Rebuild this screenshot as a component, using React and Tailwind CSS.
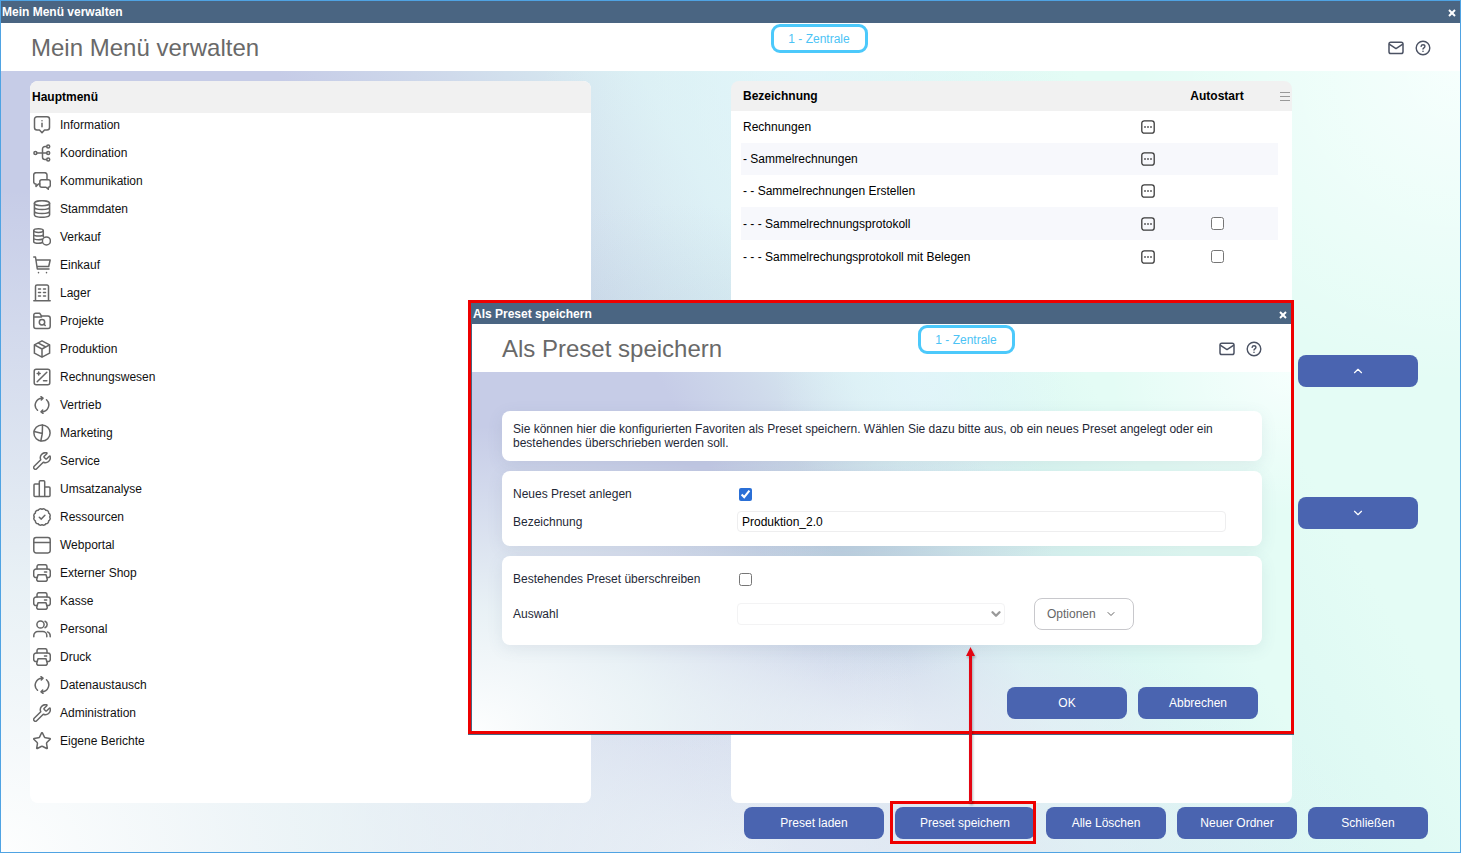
import React, { useState } from 'react';
import { ChevronDown, ChevronUp, Star, Users, Wrench, X } from 'lucide-react';

const BACKDROP =
  'bg-[radial-gradient(ellipse_22%_40%_at_100%_0%,#f6fffd,transparent),radial-gradient(ellipse_55%_85%_at_0%_100%,#fdfefe_0%,#f1faf9cc_40%,transparent),radial-gradient(ellipse_25%_35%_at_46%_52%,#b6d0de99,transparent),radial-gradient(ellipse_45%_30%_at_50%_100%,#eaf1f7dd,transparent),radial-gradient(ellipse_18%_50%_at_55%_0%,#e3f5fbcc,transparent),linear-gradient(60deg,#c6cce7_38%,#cfdaeb_47%,#d9eef2_57%,#dcf8f3_69%,#e4fcf5_80%)]';

// Scalloped outline of the "Ressourcen" badge
const badgePath = (() => {
  const lobes = 12;
  const points = Array.from({ length: lobes }, (_, i) => {
    const a = (i / lobes) * Math.PI * 2;
    return `${(9 + 7.7 * Math.cos(a)).toFixed(2)} ${(9 + 7.7 * Math.sin(a)).toFixed(2)}`;
  });
  return `M${points[0]}` + points.slice(1).concat(points[0]).map((p) => `A2.6 2.6 0 0 1 ${p}`).join('') + 'z';
})();

function Icon({ children }) {
  return (
    <svg
      viewBox="0 0 18 18"
      className="mt-[3px] size-[18px] shrink-0 text-[#666]"
      fill="none"
      stroke="currentColor"
      strokeWidth="1.5"
      strokeLinecap="round"
      strokeLinejoin="round"
      aria-hidden="true"
    >
      {children}
    </svg>
  );
}

const PrinterIcon = () => (
  <Icon>
    <path d="M4 5V2.7a2 2 0 0 1 2-2h6a2 2 0 0 1 2 2V5" />
    <path d="M4 13.6H3A2.3 2.3 0 0 1 .7 11.3V7.5A2.5 2.5 0 0 1 3.2 5h11.6a2.5 2.5 0 0 1 2.5 2.5v3.8a2.3 2.3 0 0 1-2.3 2.3h-1" />
    <path d="M5 10.7h8l1.2 4.3a1.8 1.8 0 0 1-1.7 2.3h-7A1.8 1.8 0 0 1 3.8 15z M11.5 8h2.2" />
  </Icon>
);

const CycleIcon = () => (
  <Icon>
    <path d="M9.5 2.2A6.9 6.9 0 0 0 4.5 14.2 M8 .7l2 1.5L8.3 4" />
    <path d="M8.5 15.8a6.9 6.9 0 0 0 5-12 M10 17.3l-2-1.5L9.7 14" />
  </Icon>
);

const WrenchIcon = () => (
  <Wrench viewBox="1.2 1.2 21.6 21.6" strokeWidth={1.8} className="mt-[3px] size-[18px] shrink-0 text-[#666]" />
);

const menuItems = [
  {
    label: 'Information',
    icon: (
      <Icon>
        <path d="M4 .8h10A2.5 2.5 0 0 1 16.500 3.300v8.200A2.500 2.500 0 0 1 14 14h-2.500L9 16.800 6.500 14H4a2.500 2.500 0 0 1-2.500-2.500V3.300A2.500 2.500 0 0 1 4 .8z M9 7.300v3.500 M9 4.700v.1" />
      </Icon>
    ),
  },
  {
    label: 'Koordination',
    icon: (
      <Icon>
        <circle cx="2.4" cy="9" r="1.5" />
        <circle cx="15.2" cy="2.5" r="1.5" />
        <circle cx="15.2" cy="9" r="1.5" />
        <circle cx="15.2" cy="15.5" r="1.5" />
        <path d="M4 9h9.600 M13.600 2.500H12A2.500 2.500 0 0 0 9.500 5v8a2.500 2.500 0 0 0 2.500 2.500h1.600" />
      </Icon>
    ),
  },
  {
    label: 'Kommunikation',
    icon: (
      <Icon>
        <path d="M14 7.500V3A2.300 2.300 0 0 0 11.700.7H3A2.300 2.300 0 0 0 .7 3v6.800A2.300 2.300 0 0 0 3 12.100v2.400l2.400-2.400h1.400" />
        <path d="M8.800 7.700h6.500a2 2 0 0 1 2 2v3.600a2 2 0 0 1-2 2v2l-2.300-2H8.800a2 2 0 0 1-2-2V9.700a2 2 0 0 1 2-2z" />
      </Icon>
    ),
  },
  {
    label: 'Stammdaten',
    icon: (
      <Icon>
        <ellipse cx="9" cy="3.2" rx="7.6" ry="2.5" />
        <path d="M1.400 3.200v11.600c0 1.400 3.400 2.500 7.600 2.500s7.600-1.100 7.600-2.500V3.200 M1.400 7c0 1.400 3.400 2.500 7.600 2.500s7.600-1.100 7.600-2.500 M1.400 11c0 1.400 3.400 2.500 7.600 2.500s7.600-1.100 7.600-2.500" />
      </Icon>
    ),
  },
  {
    label: 'Verkauf',
    icon: (
      <Icon>
        <ellipse cx="5.5" cy="2.6" rx="4.8" ry="1.8" />
        <path d="M.7 2.600v10.900c0 1 2.100 1.800 4.800 1.800 1.300 0 2.500-.2 3.400-.5 M10.300 2.600v6 M.7 6.200C.7 7.200 2.800 8 5.500 8s4.800-.8 4.800-1.800 M.7 9.900c0 1 2.100 1.800 4.800 1.800 1.300 0 2.500-.2 3.400-.5" />
        <circle cx="13.4" cy="12.900" r="4" />
      </Icon>
    ),
  },
  {
    label: 'Einkauf',
    icon: (
      <Icon>
        <path d="M.7 1h1.800l1.800 12h11.700 M3 4h14.200l-1.500 6.500H4 M5.500 16.400v.3 M13.500 16.400v.3" />
      </Icon>
    ),
  },
  {
    label: 'Lager',
    icon: (
      <Icon>
        <path d="M2.500 16.700V2.500A1.500 1.500 0 0 1 4 1h10a1.500 1.500 0 0 1 1.500 1.500v14.200 M.8 16.700h16.400 M5.500 5h2 M10.500 5h2 M5.500 8.500h2 M10.500 8.500h2 M5.500 12h2 M10.500 12h2" />
      </Icon>
    ),
  },
  {
    label: 'Projekte',
    icon: (
      <Icon>
        <path d="M.8 5V3a1.800 1.800 0 0 1 1.800-1.800h4L8.500 4H15a2.300 2.300 0 0 1 2.200 2.300v8A2.300 2.300 0 0 1 15 16.600H3a2.300 2.300 0 0 1-2.200-2.300V5h7.700" />
        <circle cx="9" cy="10.300" r="2.700" />
        <path d="M11 12.300l1.200 1.200" />
      </Icon>
    ),
  },
  {
    label: 'Produktion',
    icon: (
      <Icon>
        <path d="M9 .8l7.600 4v8.400L9 17.200l-7.600-4V4.800z M1.400 4.800L9 9l7.600-4.200 M9 9v8.200 M5 2.900L12.800 7" />
      </Icon>
    ),
  },
  {
    label: 'Rechnungswesen',
    icon: (
      <Icon>
        <rect x="1.200" y="1.200" width="15.600" height="15.600" rx="2" />
        <path d="M4.200 13.800l9.600-9.600 M4.200 5.500h3 M5.700 4v3 M10.500 12.700h3.300" />
      </Icon>
    ),
  },
  { label: 'Vertrieb', icon: <CycleIcon /> },
  {
    label: 'Marketing',
    icon: (
      <Icon>
        <circle cx="9" cy="9" r="8.100" />
        <path d="M9.500 1L9.300 9.500 7.800 17 M1.200 7.500l8.100 2" />
      </Icon>
    ),
  },
  { label: 'Service', icon: <WrenchIcon /> },
  {
    label: 'Umsatzanalyse',
    icon: (
      <Icon>
        <path d="M6.300 16.500V1.800a1 1 0 0 1 1-1h3.400a1 1 0 0 1 1 1v14.700 M6.300 4H2a1 1 0 0 0-1 1v10.500a1 1 0 0 0 1 1h14a1 1 0 0 0 1-1V8a1 1 0 0 0-1-1h-4.300" />
      </Icon>
    ),
  },
  {
    label: 'Ressourcen',
    icon: (
      <Icon>
        <path d={badgePath} />
        <path d="M6.300 9.200l2 1.900 3.600-3.800" />
      </Icon>
    ),
  },
  {
    label: 'Webportal',
    icon: (
      <Icon>
        <rect x=".8" y="1.500" width="16.400" height="15.400" rx="2.300" />
        <path d="M.8 6.500h16.400" />
      </Icon>
    ),
  },
  { label: 'Externer Shop', icon: <PrinterIcon /> },
  { label: 'Kasse', icon: <PrinterIcon /> },
  {
    label: 'Personal',
    icon: (
      <Icon>
        <circle cx="7.500" cy="4.500" r="3.600" />
        <path d="M.8 16.800v-1.300a4 4 0 0 1 4-4h5a4 4 0 0 1 4 4v1.300 M12 1.200a3.600 3.600 0 0 1 0 6.600 M14.500 11.900a4 4 0 0 1 2.700 3.800v1.100" />
      </Icon>
    ),
  },
  { label: 'Druck', icon: <PrinterIcon /> },
  { label: 'Datenaustausch', icon: <CycleIcon /> },
  { label: 'Administration', icon: <WrenchIcon /> },
  {
    label: 'Eigene Berichte',
    icon: <Star viewBox="1.2 1.2 21.6 21.6" strokeWidth={1.8} className="mt-[3px] size-[18px] shrink-0 text-[#666]" />,
  },
];

const favorites = [
  { name: 'Rechnungen', autostart: false },
  { name: '- Sammelrechnungen', autostart: false },
  { name: '- - Sammelrechnungen Erstellen', autostart: false },
  { name: '- - - Sammelrechnungsprotokoll', autostart: true },
  { name: '- - - Sammelrechungsprotokoll mit Belegen', autostart: true },
];

function Button({ children, className = 'w-[120px]', ...props }) {
  return (
    <button
      type="button"
      className={`flex h-8 items-center justify-center rounded-lg bg-[#4a64b0] text-white ${className}`}
      {...props}
    >
      {children}
    </button>
  );
}

function TitleBar({ title, className = 'h-[22px]' }) {
  return (
    <div className={`flex items-center justify-between bg-[#4a6582] pl-px text-white ${className}`}>
      <span className="font-bold">{title}</span>
      <button type="button" aria-label="Fenster schließen" className="mt-0.5 flex w-4 justify-center">
        <X size={12} strokeWidth={4} strokeLinecap="butt" />
      </button>
    </div>
  );
}

function PageHeader({ title, badgeClass }) {
  return (
    <header className="flex h-12 items-start bg-white">
      <h1 className="w-1/2 shrink-0 pl-[30px] text-2xl leading-[50px] text-[#696969]">{title}</h1>
      <span
        className={`mt-px flex h-[29px] w-[97px] shrink-0 items-center justify-center rounded-[9px] border-3 border-[#4cc9fb] text-[#4cc3f5] ${badgeClass}`}
      >
        1 - Zentrale
      </span>
      <div className="mr-[29px] ml-auto flex h-full items-center gap-[11px] pt-0.5 text-[#4b5263]">
        <button type="button" aria-label="Nachricht">
          <svg viewBox="0 0 16 16" className="size-4" fill="none" stroke="currentColor" strokeWidth="1.5" strokeLinejoin="round">
            <rect x="1" y="2.200" width="14" height="11.400" rx="1.800" />
            <path d="M1.200 4.200L8 8.600l6.800-4.400" />
          </svg>
        </button>
        <button type="button" aria-label="Hilfe">
          <svg viewBox="0 0 16 16" className="size-4" fill="none" stroke="currentColor" strokeWidth="1.4" strokeLinecap="round">
            <circle cx="8" cy="8" r="6.800" />
            <path d="M6.100 6.400c.2-1.200 1-1.700 1.900-1.700 1.100 0 1.900.7 1.900 1.700 0 1.400-1.900 1.500-1.900 2.700 M8 11.300v.1" />
          </svg>
        </button>
      </div>
    </header>
  );
}

function MainMenu() {
  return (
    <nav className="overflow-hidden rounded-lg bg-white">
      <h2 className="flex h-8 items-center bg-[#f1f1f1] pl-0.5 font-bold text-black">Hauptmenü</h2>
      <ul>
        {menuItems.map((item) => (
          <li key={item.label} className="h-7">
            <a href="#" className="flex h-full items-start gap-[9px] pl-[3px] leading-6 text-[#111]">
              {item.icon}
              {item.label}
            </a>
          </li>
        ))}
      </ul>
    </nav>
  );
}

function FavoritesTable() {
  return (
    <section className="flex items-start rounded-lg bg-[linear-gradient(#f1f1f1_30px,#fff_30px)] pl-[10px] text-black">
      <table className="min-w-0 flex-1 table-fixed">
        <thead>
          <tr className="h-[30px] text-left">
            <th className="pl-0.5">Bezeichnung</th>
            <th className="w-10" aria-label="Aktionen" />
            <th className="w-[110px] pr-3 text-center">Autostart</th>
          </tr>
        </thead>
        <tbody>
          {favorites.map((row) => (
            <tr key={row.name} className={`even:bg-[#f7f8fc] ${row.autostart ? 'h-[33px]' : 'h-8'}`}>
              <td className="pl-0.5">{row.name}</td>
              <td>
                <button type="button" aria-label={`${row.name} bearbeiten`} className="mx-auto block">
                  <svg viewBox="0 0 14 14" className="size-[14px]" fill="none" stroke="#3a3a3a" strokeWidth="1.3">
                    <rect x=".8" y=".8" width="12.400" height="12.400" rx="2.500" />
                    <path d="M3.200 7h1.600 M6.200 7h1.600 M9.200 7h1.600" strokeWidth="1.600" />
                  </svg>
                </button>
              </td>
              <td className="pr-3">
                {row.autostart && (
                  <input type="checkbox" aria-label={`Autostart ${row.name}`} className="mx-auto block size-[13px]" />
                )}
              </td>
            </tr>
          ))}
        </tbody>
      </table>
      <button type="button" aria-label="Spalten" className="flex h-[30px] w-[14px] items-center justify-center">
        <svg viewBox="0 0 10 10" className="size-[10px]" stroke="#999" strokeWidth="1">
          <path d="M0 1.500h10 M0 5.500h10 M0 9.500h10" />
        </svg>
      </button>
    </section>
  );
}

function PresetDialog() {
  const [createNew, setCreateNew] = useState(true);
  const [overwrite, setOverwrite] = useState(false);
  const [name, setName] = useState('Produktion_2.0');

  return (
    <div
      role="dialog"
      aria-label="Als Preset speichern"
      className="absolute top-[299px] right-[166px] z-10 w-[826px] border-3 border-[#ee0000] shadow-[0_1px_0_#4a6582]"
    >
      <div className="border-l border-[#4a6582]">
        <TitleBar title="Als Preset speichern" className="h-[21px]" />
        <PageHeader title="Als Preset speichern" badgeClass="ml-9" />
        <div className={`pt-[39px] pr-[29px] pb-3 pl-[30px] text-[#1f2937] ${BACKDROP}`}>
          <div className="flex flex-col gap-[10px]">
            <p className="rounded-lg bg-white p-[11px] pr-10 leading-[14px] shadow-[0_4px_16px_#4a64821a]">
              Sie können hier die konfigurierten Favoriten als Preset speichern. Wählen Sie dazu bitte aus, ob ein neues
              Preset angelegt oder ein bestehendes überschrieben werden soll.
            </p>

            <div className="grid grid-cols-[224px_1fr] items-center gap-y-1.5 rounded-lg bg-white pt-[13px] pr-9 pb-[14px] pl-[11px] shadow-[0_4px_16px_#4a64821a]">
              <label htmlFor="preset-new" className="leading-[21px]">Neues Preset anlegen</label>
              <input
                id="preset-new"
                type="checkbox"
                checked={createNew}
                onChange={(e) => setCreateNew(e.target.checked)}
                className="ml-0.5 size-[13px] accent-[#2a6fd6]"
              />
              <label htmlFor="preset-name">Bezeichnung</label>
              <input
                id="preset-name"
                type="text"
                value={name}
                onChange={(e) => setName(e.target.value)}
                className="h-[21px] w-full rounded-sm border border-[#eeeeef] bg-white px-1 text-black"
              />
            </div>

            <div className="grid grid-cols-[224px_1fr] items-center gap-y-2 rounded-lg bg-white pt-[13px] pb-[15px] pl-[11px] shadow-[0_4px_16px_#4a64821a]">
              <label htmlFor="preset-overwrite" className="leading-[21px]">Bestehendes Preset überschreiben</label>
              <input
                id="preset-overwrite"
                type="checkbox"
                checked={overwrite}
                onChange={(e) => setOverwrite(e.target.checked)}
                className="ml-0.5 size-[13px]"
              />
              <label htmlFor="preset-select">Auswahl</label>
              <div className="flex items-center gap-[29px]">
                <div className="relative w-[268px]">
                  <select
                    id="preset-select"
                    disabled={!overwrite}
                    className="block h-[22px] w-full appearance-none rounded-sm border border-[#f3f3f4] bg-white px-1"
                  />
                  <ChevronDown
                    size={14}
                    strokeWidth={4}
                    className="pointer-events-none absolute top-1 right-0.5 text-[#999]"
                  />
                </div>
                <button
                  type="button"
                  className="flex h-8 w-[100px] items-center gap-[9px] rounded-lg border border-[#c8c8cc] bg-white pl-3 text-[#666]"
                >
                  Optionen
                  <ChevronDown size={12} strokeWidth={2} />
                </button>
              </div>
            </div>
          </div>

          <div className="mt-[42px] flex justify-end gap-[11px] pr-1">
            <Button>OK</Button>
            <Button>Abbrechen</Button>
          </div>
        </div>
      </div>
    </div>
  );
}

function App() {
  return (
    <div className="relative flex min-h-screen flex-col border border-[#4fa3e3] bg-white font-['Liberation_Sans',Arial,sans-serif] text-xs">
      <TitleBar title="Mein Menü verwalten" />
      <PageHeader title="Mein Menü verwalten" badgeClass="ml-10" />

      <main className={`flex flex-1 flex-col pt-[10px] pb-[13px] pl-[29px] ${BACKDROP}`}>
        <div className="grid flex-1 grid-cols-[1fr_140px_1fr_126px] pr-[42px]">
          <MainMenu />
          <div />
          <FavoritesTable />
          <div className="ml-1.5 flex flex-col justify-center gap-[110px]">
            <Button aria-label="Nach oben">
              <ChevronUp size={14} />
            </Button>
            <Button aria-label="Nach unten">
              <ChevronDown size={14} />
            </Button>
          </div>
        </div>

        <div className="mt-1 flex justify-end gap-[11px] pr-8">
          <Button className="w-[140px]">Preset laden</Button>
          <div className="relative">
            <Button className="w-[140px]">Preset speichern</Button>
            {/* Highlight and pointer to the dialog */}
            <div className="pointer-events-none absolute -top-1.5 -right-px -bottom-[5px] -left-[5px] border-3 border-[#ee0000]" />
            <svg
              viewBox="0 0 11 156"
              className="pointer-events-none absolute bottom-full left-[70px] z-20 mb-1 h-[156px] w-[11px] drop-shadow-[1px_2px_1px_#0004]"
              fill="#e30613"
              aria-hidden="true"
            >
              <path d="M5.500 0L10 9H7v147H4V9H1z" />
            </svg>
          </div>
          <Button>Alle Löschen</Button>
          <Button>Neuer Ordner</Button>
          <Button>Schließen</Button>
        </div>
      </main>

      <PresetDialog />
    </div>
  );
}

export default App;
